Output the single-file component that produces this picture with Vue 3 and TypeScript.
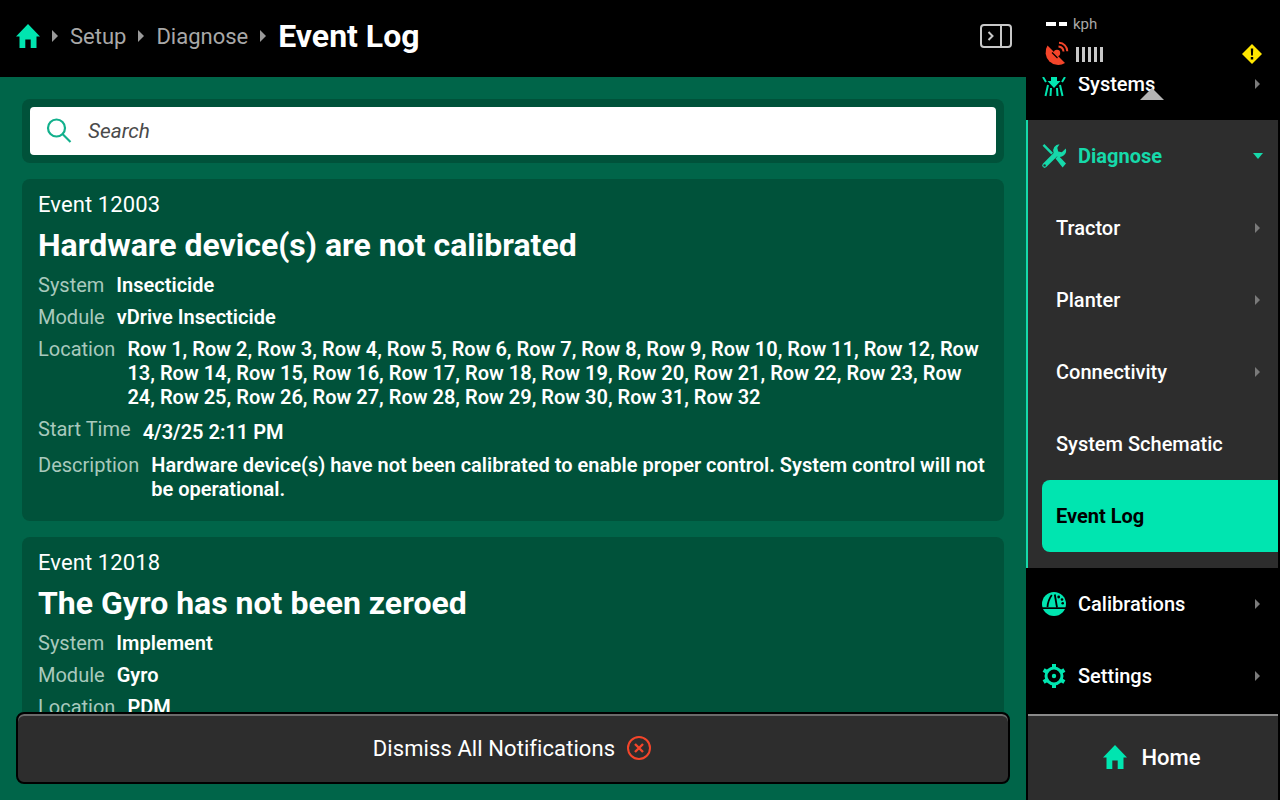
<script setup lang="ts">
interface Field { label: string; value: string }
interface LogEvent { id: number; title: string; fields: Field[] }
const events: LogEvent[] = [
  {
    id: 12003,
    title: 'Hardware device(s) are not calibrated',
    fields: [
      { label: 'System', value: 'Insecticide' },
      { label: 'Module', value: 'vDrive Insecticide' },
      { label: 'Location', value: Array.from({ length: 32 }, (_, i) => `Row ${i + 1}`).join(', ') },
      { label: 'Start Time', value: '4/3/25 2:11 PM' },
      { label: 'Description', value: 'Hardware device(s) have not been calibrated to enable proper control. System control will not be operational.' },
    ],
  },
  {
    id: 12018,
    title: 'The Gyro has not been zeroed',
    fields: [
      { label: 'System', value: 'Implement' },
      { label: 'Module', value: 'Gyro' },
      { label: 'Location', value: 'PDM' },
      { label: 'Start Time', value: '4/3/25 2:11 PM' },
    ],
  },
]
const subItems = ['Tractor', 'Planter', 'Connectivity', 'System Schematic', 'Event Log']
</script>

<template>
  <div class="app">
    <main class="main">
      <header class="topbar">
        <svg class="home-ico" viewBox="0 0 24 24"><path d="M12 0 24 12.500H20.500V24H14.700V15.500H9.300V24H3.500V12.500H0Z" /></svg>
        <i class="caret"></i><span class="crumb">Setup</span>
        <i class="caret"></i><span class="crumb">Diagnose</span>
        <i class="caret"></i><span class="crumb-now">Event Log</span>
        <svg class="panel-ico" viewBox="0 0 32 24" fill="none" stroke="#c8c8c8" stroke-width="2">
          <rect x="1" y="1" width="30" height="22" rx="3" />
          <path d="M21 1V23M8.500 8l4 4-4 4" />
        </svg>
      </header>
      <div class="content">
        <div class="search-wrap">
          <div class="search">
            <svg class="search-ico" viewBox="0 0 26 26" fill="none" stroke="#12b08c" stroke-width="2.200">
              <circle cx="10.500" cy="10" r="8.500" /><path d="M16.500 16l8 8" />
            </svg>
            <span>Search</span>
          </div>
        </div>
        <article v-for="e in events" :key="e.id" class="card">
          <div class="event-id">Event {{ e.id }}</div>
          <h2>{{ e.title }}</h2>
          <div v-for="f in e.fields" :key="f.label" class="field" :class="{ tall: f.label === 'Start Time' }">
            <span class="label">{{ f.label }}</span>
            <span class="value">{{ f.value }}</span>
          </div>
        </article>
      </div>
      <button class="dismiss">
        Dismiss All Notifications
        <svg viewBox="0 0 24 24" fill="none" stroke="#f4452a" stroke-width="2"><circle cx="12" cy="12" r="11" /><path d="M8 8l8 8M16 8l-8 8" stroke-width="2.400" /></svg>
      </button>
    </main>

    <aside class="side">
      <div class="status">
        <div class="speed"><b></b><b class="short"></b><span>kph</span></div>
        <div class="signal">
          <svg class="sat" viewBox="0 0 24 24">
            <path fill="#f4452a" d="M3.500 3.500A12.700 12.700 0 0 0 21 21Z" />
            <circle cx="13" cy="11" r="3.200" fill="#f4452a" />
            <path fill="none" stroke="#000" stroke-width="1.300" d="M8 10.500l5.500 5.500" />
            <path fill="none" stroke="#f4452a" stroke-width="2" d="M14.500 4.500a5.500 5.500 0 0 1 5 5M15 0.800a8.500 8.500 0 0 1 8.300 8.500" />
          </svg>
          <i></i><i></i><i></i><i></i><i></i>
          <svg class="warn" viewBox="0 0 20 20">
            <path fill="#ffe600" d="M10 0 20 10 10 20 0 10Z" />
            <path fill="#000" d="M8.800 4.500h2.400l-.3 7h-1.800ZM8.800 13h2.400v2.400H8.800Z" />
          </svg>
        </div>
      </div>
      <i class="pointer"></i>
      <div class="row">
        <svg class="ico" viewBox="0 0 24 24">
          <path fill="#00e5b0" d="M9 3h6v6h3.500L12 16 5.500 9H9Z" />
          <path fill="none" stroke="#00e5b0" stroke-width="2" d="M6 13 3.500 24M18 13l2.500 11M9 16l-.5 8M15 16l.5 8M1 5l3 5M23 5l-3 5" />
        </svg>
        <span>Systems</span><i class="chev"></i>
      </div>
      <section class="group">
        <div class="row group-head">
          <svg class="ico" viewBox="0 0 24 24" fill="#16d9aa">
            <path d="M17.500.2a6.500 6.500 0 0 0-5.900 8.800L.9 19.700a2.500 2.500 0 0 0 0 3.400 2.500 2.500 0 0 0 3.400 0L15 12.400a6.500 6.500 0 0 0 8.800-7.900l-4 3.800-3.600-.9-.9-3.600Z" />
            <path d="M2.300 0 11 8.800 9.300 10.500.6 1.700ZM13.500 14.500l2.900-2.900 7.600 8-3.400 3.900Z" />
            <circle cx="2.600" cy="21.400" r="1.200" fill="#2d2d2d" />
          </svg>
          <span>Diagnose</span><i class="down"></i>
        </div>
        <div v-for="s in subItems" :key="s" class="sub" :class="{ active: s === 'Event Log' }">
          <span>{{ s }}</span>
          <i v-if="['Tractor', 'Planter', 'Connectivity'].includes(s)" class="chev"></i>
        </div>
      </section>
      <div class="row">
        <svg class="ico" viewBox="0 0 24 24">
          <circle cx="12" cy="12" r="12" fill="#00e5b0" />
          <path fill="#000" d="M-1 15.300H25V17H-1Z" />
          <path fill="none" stroke="#000" stroke-width="1.800" d="M5.500 15Q5.800 8.500 9.800 3" />
          <path fill="none" stroke="#000" stroke-width="1.800" d="M12.800 2.500 15 15.500" />
          <circle cx="16.700" cy="5" r="1.400" fill="#000" />
          <circle cx="20" cy="7.500" r="1.300" fill="#000" />
          <circle cx="20.700" cy="11.300" r="1.300" fill="#000" />
        </svg>
        <span>Calibrations</span><i class="chev"></i>
      </div>
      <div class="row">
        <svg class="ico" viewBox="0 0 24 24" fill="none" stroke="#00e5b0">
          <circle cx="12" cy="12" r="8" stroke-width="3" />
          <path stroke-width="4" d="M12 0v4M12 20v4M1.600 6l3.500 2M18.900 16l3.500 2M1.600 18l3.500-2M18.900 8l3.500-2" />
          <circle cx="12" cy="12" r="2.200" fill="#00e5b0" stroke="none" />
        </svg>
        <span>Settings</span><i class="chev"></i>
      </div>
      <div class="home-btn">
        <svg viewBox="0 0 24 24"><path d="M12 0 24 12.500H20.500V24H14.700V15.500H9.300V24H3.500V12.500H0Z" /></svg>
        <span>Home</span>
      </div>
    </aside>
  </div>
</template>

<style>
html, body { margin: 0; background: #000; }
</style>

<style scoped>
.app { width: 1280px; height: 800px; display: flex; overflow: hidden; position: relative; font-family: Roboto, "Liberation Sans", sans-serif; color: #fff; background: #000; }
.main { width: 1026px; height: 800px; position: relative; background: #006549; display: flex; flex-direction: column; flex: none; }
.topbar { height: 77px; flex: none; background: #000; display: flex; align-items: center; padding: 0 14px 5px 16px; box-sizing: border-box; }
.home-ico { width: 24px; height: 24px; fill: #00e5b0; overflow: visible; margin-right: 12px; }
.caret { width: 0; height: 0; border-left: 6px solid #9a9a9a; border-top: 6px solid transparent; border-bottom: 6px solid transparent; }
.crumb { font-size: 22px; color: #a8a8a8; margin: 0 12px; }
.crumb-now { font-size: 32px; font-weight: 700; margin-left: 12px; }
.panel-ico { width: 32px; height: 24px; margin-left: auto; }
.content { flex: 1; min-height: 0; padding: 22px 22px 0; overflow: hidden; max-height: 635px; display: flex; flex-direction: column; gap: 16px; box-sizing: border-box; }
.search-wrap { background: #00523a; border-radius: 8px; padding: 8px; flex: none; }
.search { height: 48px; background: #fff; border-radius: 4px; display: flex; align-items: center; padding-left: 16px; color: #4a4a4a; font-style: italic; font-size: 20.800px; }
.search-ico { width: 26px; height: 26px; margin-right: 16px; }
.card { background: #00523a; border-radius: 8px; padding: 13px 16px 12px; flex: none; }
.event-id { font-size: 22px; line-height: 26px; letter-spacing: .1px; }
h2 { margin: 7px 0 8px; font-size: 32px; line-height: 40px; font-weight: 700; }
.field { display: flex; align-items: flex-start; gap: 12px; font-size: 20px; line-height: 24px; margin-bottom: 8px; }
.field.tall { margin-bottom: 6px; }
.field.tall .value { line-height: 30px; }
.label { color: #a9c9bd; flex: none; }
.value { font-weight: 650; }
.dismiss { position: absolute; left: 16px; top: 712px; width: 994px; height: 72px; box-sizing: border-box; border: 2px solid #000; border-radius: 8px; padding: 0 2px 0 0; background: #2d2d2d; box-shadow: inset 0 2px 0 #6a6a6a; color: #fff; font: 400 22px Roboto, sans-serif; letter-spacing: .08px; display: flex; align-items: center; justify-content: center; gap: 12px; }
.dismiss svg { width: 24px; height: 24px; }
.side { width: 254px; height: 800px; flex: none; position: relative; background: #000; padding-top: 48px; box-sizing: border-box; display: flex; flex-direction: column; }
.status { position: absolute; inset: 0 0 auto 0; height: 77px; background: #000; z-index: 1; }
.speed { position: absolute; left: 20px; top: 14px; display: flex; align-items: center; gap: 3px; height: 20px; }
.speed b { width: 10px; height: 4px; background: #fff; }
.speed b.short { width: 8px; }
.speed span { font-size: 15px; line-height: 20px; color: #a8a8a8; margin-left: 3px; }
.signal { position: absolute; left: 18px; top: 42px; width: 218px; height: 24px; display: flex; align-items: center; gap: 3px; }
.sat { width: 24px; height: 24px; margin-right: 5px; overflow: visible; }
.signal i { width: 3px; height: 15px; background: #c8c8c8; }
.warn { width: 20px; height: 20px; margin-left: auto; }
.pointer { position: absolute; left: 114px; top: 88px; width: 0; height: 0; border-left: 12px solid transparent; border-right: 12px solid transparent; border-bottom: 12px solid #b4b4b4; z-index: 2; }
.row { height: 72px; flex: none; display: flex; align-items: center; padding: 0 20px 0 16px; font-size: 20px; font-weight: 500; position: relative; box-sizing: border-box; }
.row > span { margin-left: 12px; }
.ico { width: 24px; height: 24px; overflow: visible; flex: none; }
.chev { margin-left: auto; width: 0; height: 0; border-left: 5px solid #7a7a7a; border-top: 5px solid transparent; border-bottom: 5px solid transparent; }
.down { margin-left: auto; width: 0; height: 0; border-top: 6px solid #16d9aa; border-left: 5.500px solid transparent; border-right: 5.500px solid transparent; }
.group { background: #2d2d2d; border-left: 2px solid #16d9aa; margin-right: 2px; height: 448px; flex: none; box-sizing: border-box; }
.group-head { color: #16d9aa; font-weight: 700; padding-left: 14px; padding-right: 15px; }
.sub { height: 72px; display: flex; align-items: center; padding: 0 18px 0 28px; font-size: 20px; font-weight: 500; box-sizing: border-box; }
.sub.active { background: #00e5b0; color: #000; font-weight: 700; margin-left: 14px; padding-left: 14px; border-radius: 8px 0 0 8px; }
.home-btn { flex: 1; margin: 2px 2px 0 2px; border-top: 2px solid #8a8a8a; padding: 0 2px 2px 0; background: #2d2d2d; display: flex; align-items: center; justify-content: center; gap: 14px; font-size: 22px; font-weight: 500; }
.home-btn svg { width: 24px; height: 24px; fill: #00e5b0; overflow: visible; }
</style>
